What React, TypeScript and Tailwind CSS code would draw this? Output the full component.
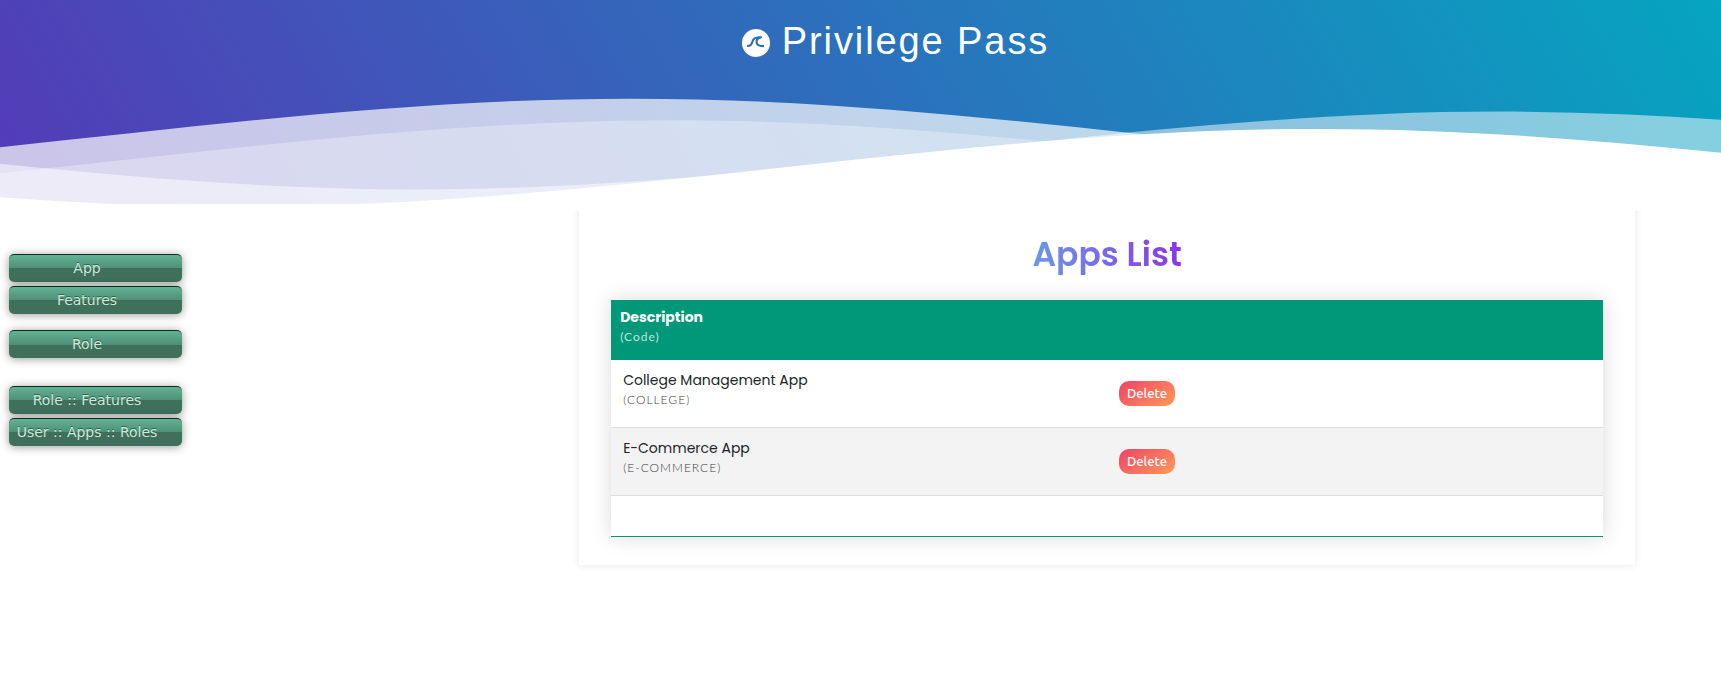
import React from "react";

const WAVE = "M-160 44c30 0 58-18 88-18s58 18 88 18 58-18 88-18 58 18 88 18v44h-352z";

const waves = [
  { x: 123.3, y: 0, fill: "rgba(255,255,255,0.7)" },
  { x: 18, y: 3, fill: "rgba(255,255,255,0.5)" },
  { x: 126.7, y: 5, fill: "rgba(255,255,255,0.3)" },
  { x: 3.4, y: 7, fill: "#fff" },
];

const menuGroups = [["App", "Features"], ["Role"], ["Role :: Features", "User :: Apps :: Roles"]];

const apps = [
  { name: "College Management App", code: "COLLEGE" },
  { name: "E-Commerce App", code: "E-COMMERCE" },
];

function Logo() {
  return (
    <svg className="h-7 w-7" viewBox="0 0 28 28" aria-hidden="true">
      <circle cx="14" cy="14" r="14" fill="#fff" />
      <g fill="none" stroke="#2f6dbd" strokeWidth="2.1">
        <path d="M5 17c3.400.2 4.500-.9 5.200-3.700.8-3.500 2.300-5.100 9.600-5.100" />
        <path d="M18.600 8.400c-3.300.7-4.300 2.600-4 5.200.3 2.500 2.200 3.500 7.400 3.500" />
      </g>
    </svg>
  );
}

function Header() {
  return (
    <header className="relative z-10">
      <div className="flow-root bg-[linear-gradient(60deg,#543ab7_0%,#00acc1_107%)]">
        <div className="flex h-[90px] items-start justify-center gap-3 pl-[70px] pt-[17px] text-white">
          <span className="pt-3">
            <Logo />
          </span>
          <h1 className="text-[38px] leading-[48px] font-light tracking-wider [font-family:'Liberation_Sans',Arial,sans-serif]">
            Privilege Pass
          </h1>
        </div>
        <svg
          className="-mb-[7px] block h-[121px] w-full"
          viewBox="0 24 140 28"
          preserveAspectRatio="none"
          aria-hidden="true"
        >
          {waves.map((w) => (
            <path key={w.y} d={WAVE} transform={`translate(${w.x} ${w.y})`} fill={w.fill} />
          ))}
        </svg>
      </div>
    </header>
  );
}

function MenuButton({ label }: { label: string }) {
  return (
    <button
      type="button"
      className="h-7 w-full rounded-[5px] border-t border-[#0f2a22] bg-[linear-gradient(to_bottom,#62b294_0%,#4f8f77_50%,#3e705c_50%,#3e705c_100%)] pr-[17px] pb-[2px] text-center text-[14px] leading-6 whitespace-nowrap text-[#ccebdd] shadow-[0_1px_10px_rgba(0,0,0,0.4)] [font-family:'DejaVu_Sans',sans-serif] [text-shadow:0_-1px_0_rgba(0,0,0,0.4)]"
    >
      {label}
    </button>
  );
}

export default function App() {
  return (
    <div className="min-h-screen bg-white">
      <Header />
      <div className="flex">
        <nav className="ml-[9px] flex w-[173px] shrink-0 flex-col pt-[50px]">
          {menuGroups.map((group, i) => (
            <div key={i} className="flex flex-col gap-1 pb-4 last:pt-3">
              {group.map((label) => (
                <MenuButton key={label} label={label} />
              ))}
            </div>
          ))}
        </nav>
        <main className="mr-[5%] ml-auto w-[61.35%] bg-white px-8 pt-[30px] pb-7 shadow-[0_0_8px_rgba(0,0,0,0.1)]">
          <h2 className="text-center text-[33px] leading-[42px] font-semibold [font-family:Poppins,'Open_Sans',sans-serif]">
            <span className="bg-[linear-gradient(to_right,#6a9ae6,#8a36e8)] bg-clip-text text-transparent">
              Apps List
            </span>
          </h2>
          <table className="mt-6 w-full table-fixed border-separate border-spacing-0 border-b border-[#009879] text-left shadow-[0_0_20px_rgba(0,0,0,0.15)] [font-family:Poppins,'Open_Sans',sans-serif]">
            <thead>
              <tr className="h-[60px] bg-[#009879] align-top text-white">
                <th scope="col" className="w-1/2 px-[9px] pt-[6px] text-[14px] leading-[22px] font-bold">
                  Description
                  <div className="text-[12px] leading-[18px] font-normal tracking-[1px] text-[#bfe5dd] [font-family:Lato,sans-serif]">
                    (Code)
                  </div>
                </th>
                <th scope="col" aria-label="Actions" />
              </tr>
            </thead>
            <tbody>
              {apps.map((app) => (
                <tr key={app.code} className="h-[68px] align-top even:bg-[#f3f3f3]">
                  <td className="border-b border-[#dddddd] px-3 pt-[9px] text-[14px] leading-[22px] text-[#212529]">
                    {app.name}
                    <div className="text-[12px] leading-[18px] font-light tracking-[1px] text-[#3c3c3c] [font-family:Lato,sans-serif]">
                      ({app.code})
                    </div>
                  </td>
                  <td className="border-b border-[#dddddd] pl-3 align-middle">
                    <button
                      type="button"
                      className="block h-[25px] w-14 rounded-[10px] bg-[linear-gradient(144deg,#ee4466,#ff9a5a)] text-center text-[13px] leading-[25px] font-medium text-white [font-family:Ubuntu,'Noto_Sans',sans-serif]"
                    >
                      Delete
                    </button>
                  </td>
                </tr>
              ))}
              <tr className="h-[40px]">
                <td colSpan={2} />
              </tr>
            </tbody>
          </table>
        </main>
      </div>
    </div>
  );
}
